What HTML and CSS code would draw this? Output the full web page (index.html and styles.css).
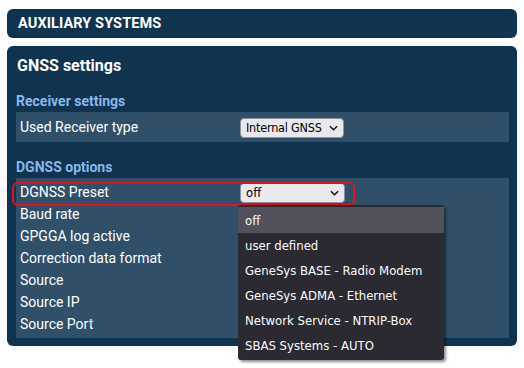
FILE: index.html
```html
<!DOCTYPE html>
<html>
<head>
<meta charset="utf-8">
<link rel="stylesheet" href="styles.css">
</head>
<body>
<div class="page">
  <div class="header">AUXILIARY SYSTEMS</div>
  <div class="panel">
    <div class="title">GNSS settings</div>
    <div class="section">Receiver settings</div>
    <div class="group group-single">
      <div class="row row-tall">
        <span class="label">Used Receiver type</span>
        <span class="select select-auto"><span class="sel-text sel-small">Internal GNSS</span><svg class="chev" viewBox="0 0 10 6" width="9" height="6"><path d="M1 1 L5 5 L9 1" fill="none" stroke="#111" stroke-width="1.6"/></svg></span>
      </div>
    </div>
    <div class="section">DGNSS options</div>
    <div class="group group-multi">
      <div class="row row-hl">
        <span class="label">DGNSS Preset</span>
        <span class="select select-wide"><span class="sel-text">off</span><svg class="chev" viewBox="0 0 10 6" width="9" height="6"><path d="M1 1 L5 5 L9 1" fill="none" stroke="#111" stroke-width="1.6"/></svg></span>
        <div class="highlight"></div>
        <div class="dropdown">
          <div class="opt opt-active">off</div>
          <div class="opt">user defined</div>
          <div class="opt">GeneSys BASE - Radio Modem</div>
          <div class="opt">GeneSys ADMA - Ethernet</div>
          <div class="opt">Network Service - NTRIP-Box</div>
          <div class="opt">SBAS Systems - AUTO</div>
        </div>
      </div>
      <div class="row"><span class="label">Baud rate</span></div>
      <div class="row"><span class="label">GPGGA log active</span></div>
      <div class="row"><span class="label">Correction data format</span></div>
      <div class="row"><span class="label">Source</span></div>
      <div class="row"><span class="label">Source IP</span></div>
      <div class="row"><span class="label">Source Port</span></div>
    </div>
  </div>
</div>
</body>
</html>
```

FILE: styles.css
```css
* { box-sizing: border-box; }
html, body { margin: 0; padding: 0; background: #ffffff; }
body { font-family: Roboto, "Liberation Sans", sans-serif; color: #ffffff; min-height: 368px; }
.page {
  width: 524px;
  min-height: 368px;
  padding: 9px 7px 0 7px;
  display: flex;
  flex-direction: column;
  gap: 8px;
}
.header {
  height: 29px;
  background: #10344f;
  border-radius: 6px;
  padding-left: 11px;
  display: flex;
  align-items: center;
  font-weight: 700;
  font-size: 14.5px;
  letter-spacing: 0.1px;
}
.panel {
  background: #10344f;
  border-radius: 6px;
  padding: 0 8px 8px 9px;
  height: 300px;
}
.title {
  height: 38px;
  padding-top: 0;
  padding-left: 1px;
  font-weight: 700;
  font-size: 16px;
  display: flex;
  align-items: center;
}
.section {
  height: 28px;
  padding-top: 6px;
  display: flex;
  align-items: center;
  font-weight: 700;
  font-size: 14px;
  color: #8ab6ea;
}
.group { background: #30506a; }
.group-single { margin-bottom: 8px; }
.group-multi { padding: 3px 0 3px 0; }
.row {
  position: relative;
  height: 22px;
  display: flex;
  align-items: center;
  padding-left: 4px;
  font-size: 14px;
}
.row-tall { height: 30px; }
.label { width: 220px; flex: none; }
.select {
  flex: none;
  height: 20px;
  background: #e9e9ed;
  border: 1px solid #8f8f9d;
  border-radius: 4px;
  color: #000;
  font-family: "DejaVu Sans Condensed", "DejaVu Sans", sans-serif;
  font-size: 13px;
  display: flex;
  align-items: center;
  padding: 0 4px 0 5px;
  justify-content: space-between;
  white-space: nowrap;
}
.sel-text { white-space: nowrap; }
.sel-small { font-size: 12.5px; letter-spacing: -0.2px; }
.select-auto { width: 104px; margin-top: 1px; }
.select-wide { width: 105px; margin-top: 1px; }
.chev { margin-left: 3px; margin-right: 1px; flex: none; }
.highlight {
  position: absolute;
  left: -4px;
  top: 1px;
  width: 343px;
  height: 24px;
  border: 2px solid #e8101c;
  border-radius: 6px;
}
.dropdown {
  position: absolute;
  left: 222px;
  top: 24px;
  width: 206px;
  height: 155px;
  background: #2b2a33;
  border-radius: 3px;
  padding-top: 2px;
  box-shadow: 2px 2px 3px rgba(0,0,0,0.45);
  z-index: 5;
  font-family: "DejaVu Sans Condensed", "DejaVu Sans", sans-serif;
  font-size: 13px;
  color: #fbfbfe;
}
.opt {
  height: 25px;
  display: flex;
  align-items: center;
  padding-left: 7px;
}
.opt-active { background: #52515b; height: 26px; }
```
